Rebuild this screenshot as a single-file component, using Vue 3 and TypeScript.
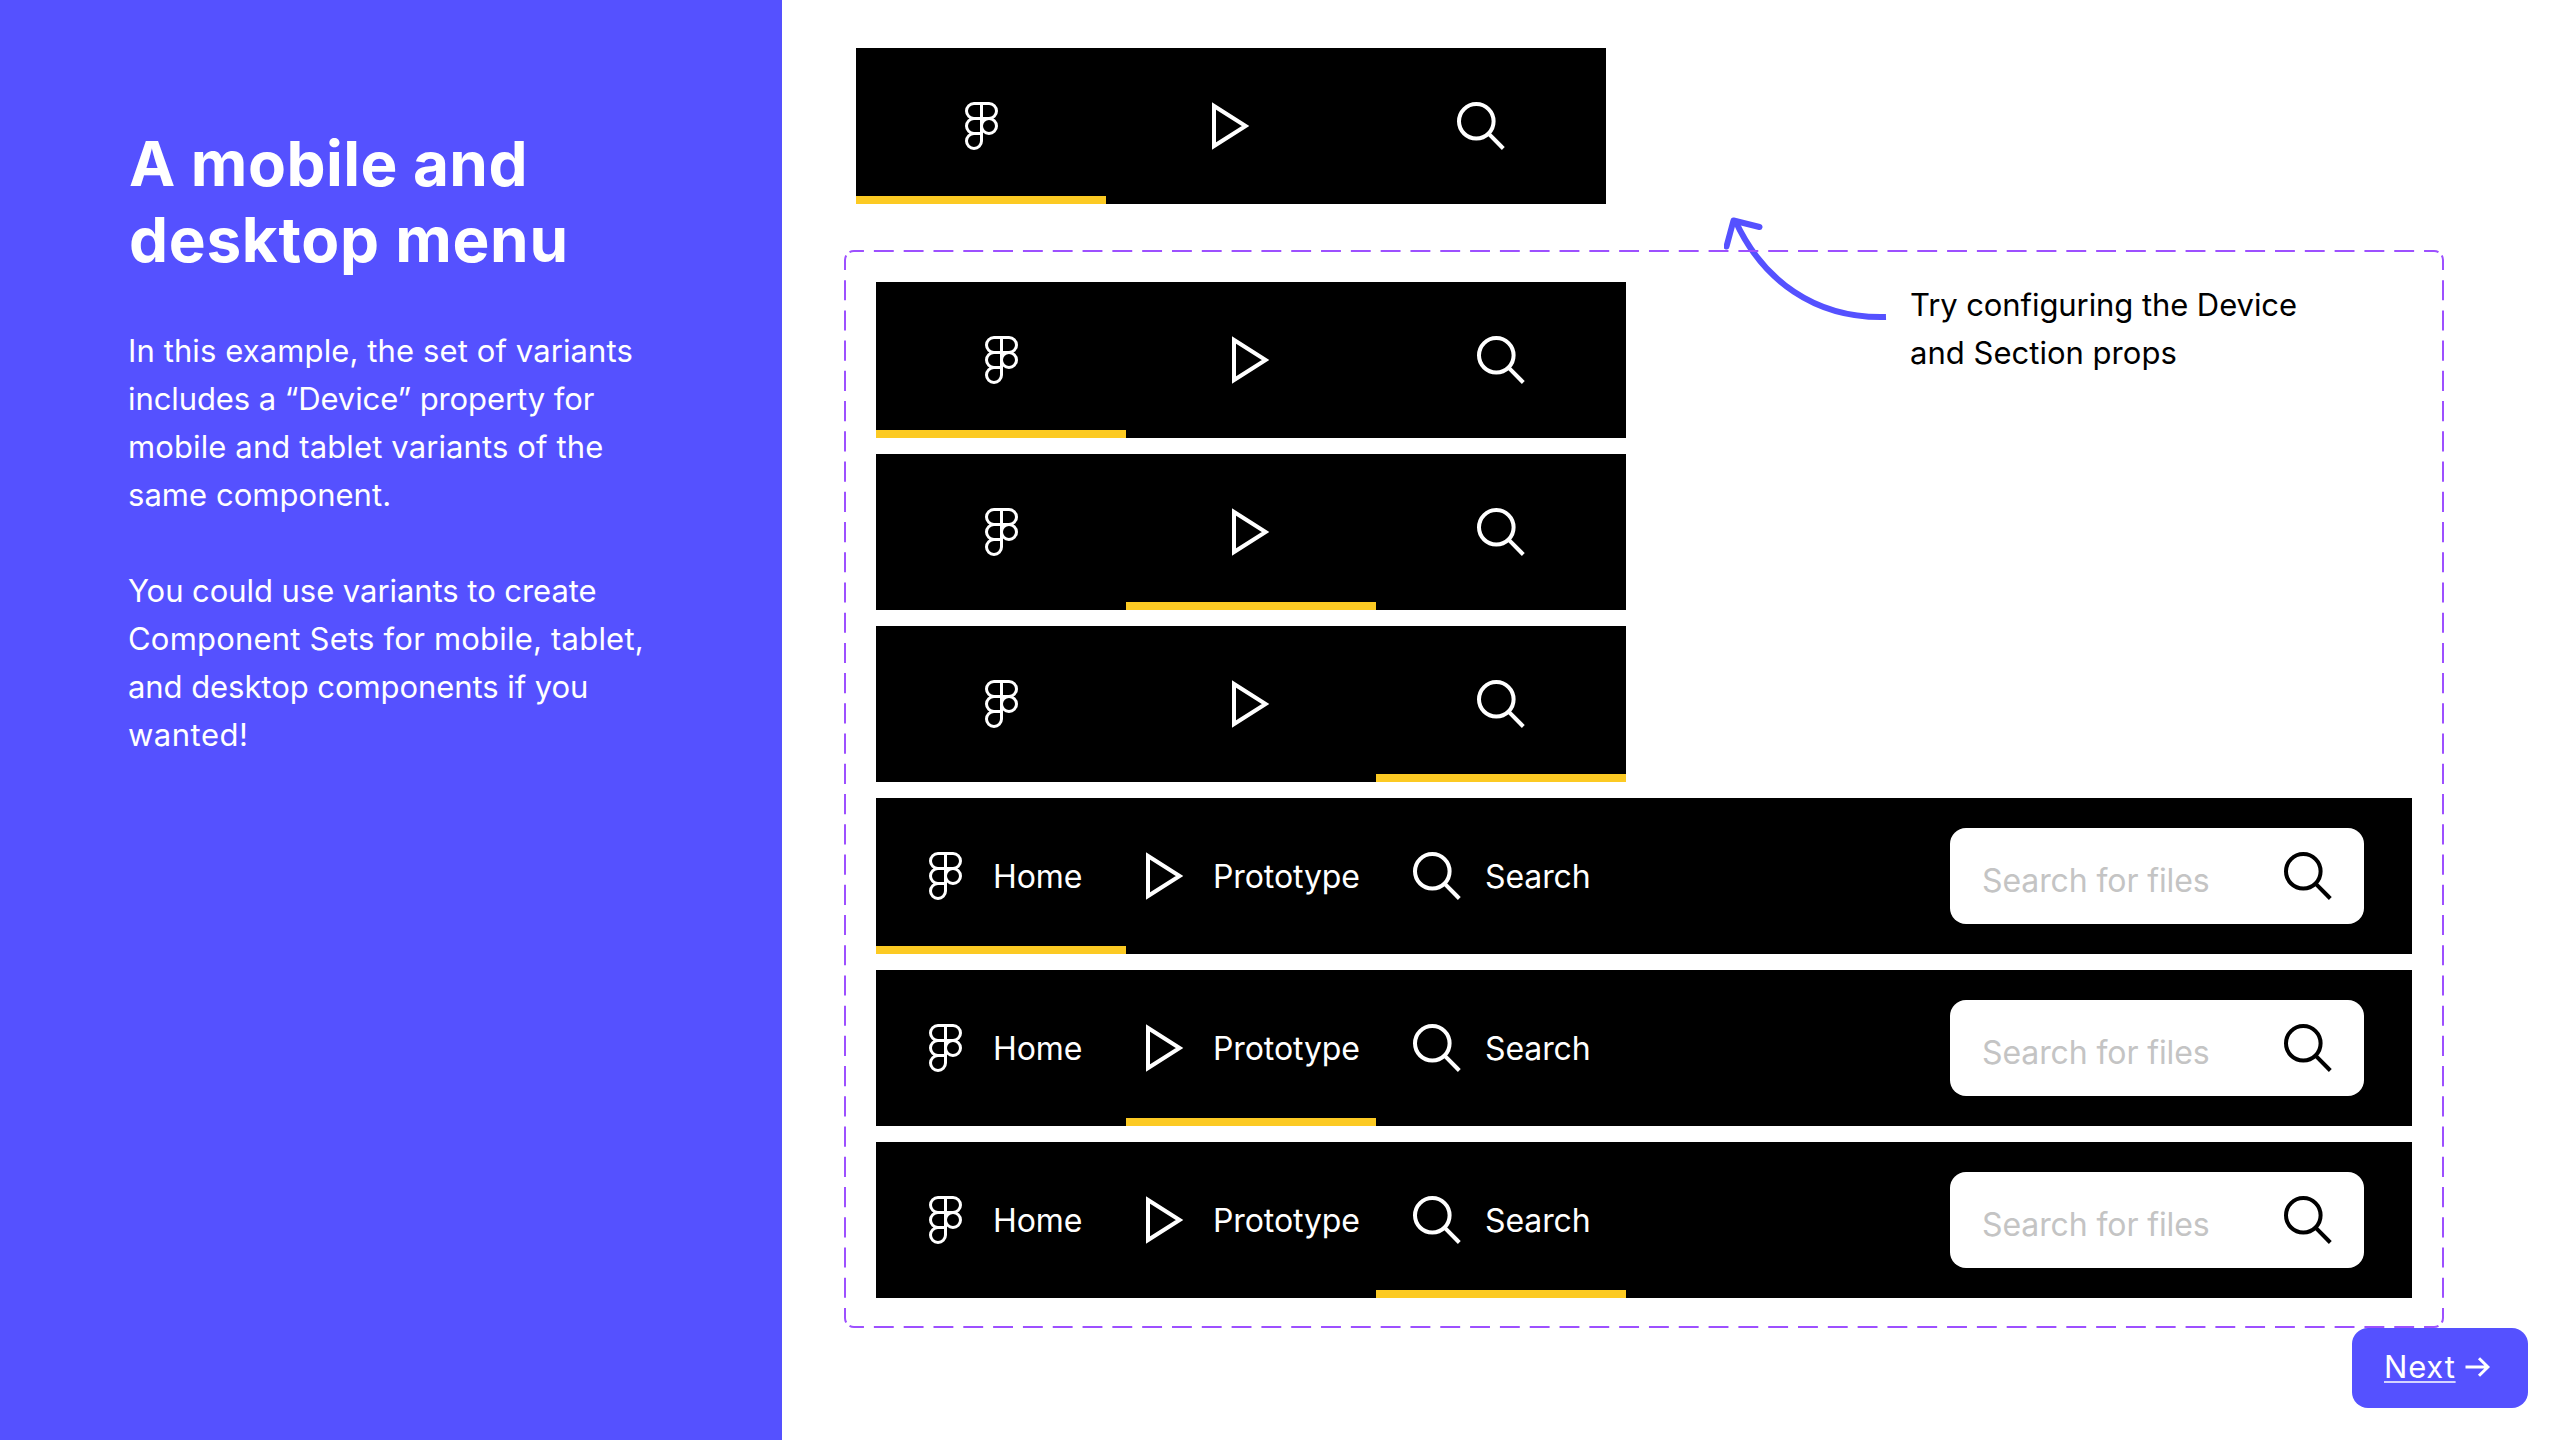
<script setup lang="ts">
import { h } from 'vue'
import type { FunctionalComponent } from 'vue'

interface Line {
  text: string
  spacing: number
}

interface Bar {
  desktop: boolean
  active: number
}

const title: Line[] = [
  { text: 'A mobile and', spacing: 0.45 },
  { text: 'desktop menu', spacing: 0.7 },
]

const paragraphs: Line[][] = [
  [
    { text: 'In this example, the set of variants', spacing: 0.106 },
    { text: 'includes a “Device” property for', spacing: -0.09 },
    { text: 'mobile and tablet variants of the', spacing: 0.12 },
    { text: 'same component.', spacing: 0.04 },
  ],
  [
    { text: 'You could use variants to create', spacing: -0.055 },
    { text: 'Component Sets for mobile, tablet,', spacing: 0.21 },
    { text: 'and desktop components if you', spacing: -0.06 },
    { text: 'wanted!', spacing: 0.5 },
  ],
]

const callout: Line[] = [
  { text: 'Try configuring the Device', spacing: -0.08 },
  { text: 'and Section props', spacing: 0.02 },
]

const tabs = [
  { name: 'figma', label: 'Home', width: 88 },
  { name: 'play', label: 'Prototype', width: 148 },
  { name: 'search', label: 'Search', width: 104 },
]

const preview: Bar = { desktop: false, active: 0 }
const variants: Bar[] = [false, true].flatMap((desktop) =>
  [0, 1, 2].map((active) => ({ desktop, active })),
)

const Icon: FunctionalComponent<{ name: string }> = (props) => {
  const shapes: Record<string, ReturnType<typeof h>[]> = {
    figma: [
      h('path', {
        'stroke-width': 3,
        d: 'M24.5 1.5H17a7.5 7.5 0 0 0 0 15h7.5zM24.5 1.5H32a7.5 7.5 0 0 1 0 15h-7.5zM24.5 16.5H17a7.5 7.5 0 0 0 0 15h7.5zM24.5 31.5H17a7.5 7.5 0 1 0 7.5 7.5z',
      }),
      h('circle', { 'stroke-width': 3, cx: 32, cy: 24, r: 7.5 }),
    ],
    play: [h('path', { 'stroke-width': 4, d: 'M7 4V44L38.6 24z' })],
    search: [
      h('circle', { 'stroke-width': 4, cx: 19.3, cy: 19.3, r: 17.3 }),
      h('path', { 'stroke-width': 4, d: 'M31.6 31.6L46.3 46.5' }),
    ],
  }
  return h(
    'svg',
    { width: 48, height: 48, viewBox: '0 0 48 48', fill: 'none', stroke: 'currentColor' },
    shapes[props.name],
  )
}
Icon.props = ['name']

const MenuBar: FunctionalComponent<{ bar: Bar }> = ({ bar }) =>
  h('nav', { class: ['bar', { desktop: bar.desktop }] }, [
    ...tabs.map((tab, i) =>
      h('a', { class: ['tab', { active: bar.active === i }] }, [
        h(Icon, { name: tab.name }),
        bar.desktop
          ? h('span', { class: 'name', style: { width: tab.width + 'px' } }, tab.label)
          : null,
      ]),
    ),
    bar.desktop
      ? h('div', { class: 'field' }, [
          h('span', { class: 'placeholder' }, 'Search for files'),
          h(Icon, { name: 'search' }),
        ])
      : null,
  ])
MenuBar.props = ['bar']

// 20px dashes with 10px gaps, stretched so each side starts and ends on half a dash
const sides = [
  { d: 'M10 1H1590', n: 53 },
  { d: 'M1599 10V1068', n: 35 },
  { d: 'M1590 1077H10', n: 53 },
  { d: 'M1 1068V10', n: 35 },
  { d: 'M1 10A9 9 0 0 1 10 1', n: 1 },
  { d: 'M1590 1A9 9 0 0 1 1599 10', n: 1 },
  { d: 'M1599 1068A9 9 0 0 1 1590 1077', n: 1 },
  { d: 'M10 1077A9 9 0 0 1 1 1068', n: 1 },
]
</script>

<template>
  <div class="page">
    <aside class="panel">
      <h1>
        <span v-for="l in title" :key="l.text" class="line" :style="{ letterSpacing: l.spacing + 'px' }">{{ l.text }}</span>
      </h1>
      <p v-for="(p, i) in paragraphs" :key="i">
        <span v-for="l in p" :key="l.text" class="line" :style="{ letterSpacing: l.spacing + 'px' }">{{ l.text }}</span>
      </p>
    </aside>

    <main class="canvas">
      <MenuBar :bar="preview" class="preview" />
      <section class="set">
        <MenuBar v-for="(b, i) in variants" :key="i" :bar="b" />

        <svg class="arrow" width="170" height="120" viewBox="0 0 170 120" fill="none" stroke="#5551ff" stroke-width="6">
          <path d="M162 107C91 109 38 70 11 10" />
          <path d="M2.5 36.5L9.5 10.5L35.5 17" stroke-linecap="round" stroke-linejoin="round" />
        </svg>
        <p class="callout">
          <span v-for="l in callout" :key="l.text" class="line" :style="{ letterSpacing: l.spacing + 'px' }">{{ l.text }}</span>
        </p>
        <svg class="outline" width="1600" height="1078" viewBox="0 0 1600 1078" fill="none" stroke="#9d50ff" stroke-width="2">
          <path v-for="s in sides" :key="s.d" :d="s.d" :pathLength="s.n * 30" stroke-dasharray="20 10" stroke-dashoffset="10" />
        </svg>
      </section>
    </main>

    <a class="next">
      <span class="label">Next</span>
      <svg width="26" height="22" viewBox="0 0 26 22" fill="none" stroke="#fff" stroke-width="3">
        <path d="M0.5 11H23.5M14 2.2L22.9 11L14 19.8" />
      </svg>
    </a>
  </div>
</template>

<style>
body {
  background: #fff;
}
</style>

<style scoped>
.page {
  position: relative;
  display: flex;
  width: 2560px;
  height: 1440px;
  overflow: hidden;
  background: #fff;
  font-family: Inter, "Liberation Sans", sans-serif;
}
.panel {
  box-sizing: border-box;
  width: 782px;
  padding: 126px 0 0 128px;
  background: #5551ff;
  color: #fff;
}
h1 {
  margin: 0 0 49px 1px;
  font-size: 62px;
  font-weight: 700;
  line-height: 76px;
}
.line {
  display: block;
  white-space: nowrap;
}
p {
  margin: 0 0 48px;
  font-size: 31px;
  line-height: 48px;
}
.canvas {
  display: flex;
  flex-direction: column;
  gap: 46px;
  padding: 48px 0 0 62px;
}
.preview {
  margin-left: 12px;
}
.set {
  position: relative;
  display: flex;
  flex-direction: column;
  gap: 16px;
  box-sizing: border-box;
  width: 1600px;
  height: 1078px;
  padding: 32px;
}
.canvas :deep(.bar) {
  display: flex;
  align-items: center;
  box-sizing: border-box;
  width: 750px;
  height: 156px;
  background: #000;
  color: #fff;
  font-size: 32px;
  line-height: 38px;
  letter-spacing: -0.1px;
}
.canvas :deep(.bar.desktop) {
  width: 1536px;
  padding-right: 48px;
}
.canvas :deep(.tab) {
  display: flex;
  align-items: center;
  justify-content: center;
  gap: 24px;
  box-sizing: border-box;
  width: 250px;
  height: 156px;
}
.canvas :deep(.tab.active) {
  box-shadow: inset 0 -8px #fcca23;
}
.canvas :deep(.name) {
  padding-top: 2px;
  white-space: nowrap;
}
.canvas :deep(svg) {
  display: block;
  flex: none;
}
.canvas :deep(.field) {
  display: flex;
  align-items: center;
  justify-content: space-between;
  box-sizing: border-box;
  width: 414px;
  height: 96px;
  margin-left: auto;
  padding: 0 32px;
  border-radius: 16px;
  background: #fff;
  color: #000;
}
.canvas :deep(.placeholder) {
  padding-top: 10px;
  color: #c4c4c4;
}
.arrow {
  position: absolute;
  left: 880px;
  top: -40px;
}
.callout {
  position: absolute;
  left: 1066px;
  top: 31px;
  margin: 0;
  color: #000;
}
.outline {
  position: absolute;
  inset: 0;
  pointer-events: none;
}
.next {
  position: absolute;
  left: 2352px;
  top: 1328px;
  display: flex;
  align-items: center;
  gap: 9px;
  box-sizing: border-box;
  width: 176px;
  height: 80px;
  padding: 0 0 2px 32px;
  border-radius: 16px;
  background: #5551ff;
  color: #fff;
}
.label {
  font-size: 31px;
  line-height: 38px;
  letter-spacing: 0.8px;
  text-decoration: underline rgba(255, 255, 255, 0.75) 2px;
  text-underline-offset: 3px;
}
</style>
